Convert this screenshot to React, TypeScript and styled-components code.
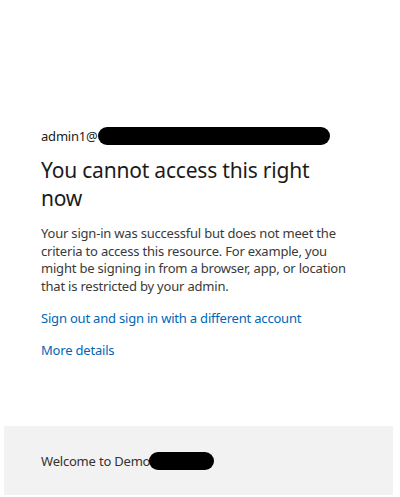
import React from "react";
import styled, { createGlobalStyle } from "styled-components";

const Global = createGlobalStyle`
  html, body { margin: 0; padding: 0; background: #ffffff; }
  body { font-family: "Noto Sans", "Open Sans", sans-serif; }
`;

const Page = styled.div`
  width: 400px;
  height: 497px;
  display: flex;
  flex-direction: column;
  box-sizing: border-box;
`;

const Main = styled.main`
  flex: 1;
  padding: 126px 0 0 41px;
  display: flex;
  flex-direction: column;
`;

const Identity = styled.div`
  display: flex;
  align-items: center;
  height: 20px;
  font-size: 13px;
  letter-spacing: -0.2px;
  color: #1b1b1b;
`;

const Redaction = styled.span<{ $w: number; $h: number; $ml?: number }>`
  display: inline-block;
  width: ${(p) => p.$w}px;
  height: ${(p) => p.$h}px;
  margin-left: ${(p) => p.$ml ?? 0}px;
  background: #000;
  border-radius: ${(p) => p.$h / 2}px;
`;

const Title = styled.h1`
  margin: 10px 0 0;
  font-size: 21px;
  line-height: 28px;
  font-weight: 400;
  letter-spacing: -0.2px;
  color: #1b1b1b;
  width: 300px;
`;

const Body = styled.p`
  margin: 13px 0 0;
  font-size: 13px;
  line-height: 17.7px;
  letter-spacing: -0.2px;
  color: #3a3a3a;
  width: 320px;
`;

const Link = styled.a<{ $mt?: number }>`
  display: block;
  font-size: 13px;
  line-height: 18px;
  letter-spacing: -0.2px;
  color: #0067b8;
  text-decoration: none;
  margin-top: ${(p) => p.$mt ?? 14}px;
`;

const Footer = styled.footer`
  margin: 0 7px 2px 4px;
  height: 69px;
  background: #f2f2f2;
  display: flex;
  align-items: center;
  padding-left: 37px;
  font-size: 13px;
  letter-spacing: -0.2px;
  color: #333;
`;

export default function App() {
  return (
    <>
      <Global />
      <Page>
        <Main>
          <Identity>
            admin1@
            <Redaction $w={232} $h={18} />
          </Identity>
          <Title>You cannot access this right now</Title>
          <Body>
            Your sign-in was successful but does not meet the criteria to access this resource. For example, you
            might be signing in from a browser, app, or location that is restricted by your admin.
          </Body>
          <Link href="#" $mt={13}>Sign out and sign in with a different account</Link>
          <Link href="#" $mt={14}>More details</Link>
        </Main>
        <Footer>
          Welcome to Demo
          <Redaction $w={65} $h={18} $ml={-1} />
        </Footer>
      </Page>
    </>
  );
}
